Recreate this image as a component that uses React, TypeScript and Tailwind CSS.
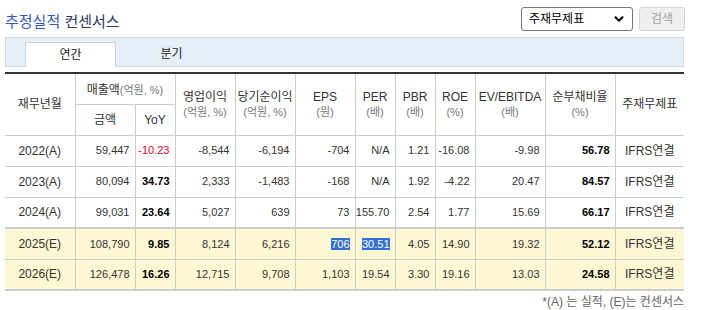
import React from "react";
import { ChevronDown } from "lucide-react";

type Row = {
  period: string;
  sales: string;
  yoy: string;
  op: string;
  net: string;
  eps: string;
  per: string;
  pbr: string;
  roe: string;
  ev: string;
  debt: string;
  estimate?: boolean;
  selected?: boolean;
};

const ROWS: ReadonlyArray<Row> = [
  { period: "2022(A)", sales: "59,447", yoy: "-10.23", op: "-8,544", net: "-6,194", eps: "-704", per: "N/A", pbr: "1.21", roe: "-16.08", ev: "-9.98", debt: "56.78" },
  { period: "2023(A)", sales: "80,094", yoy: "34.73", op: "2,333", net: "-1,483", eps: "-168", per: "N/A", pbr: "1.92", roe: "-4.22", ev: "20.47", debt: "84.57" },
  { period: "2024(A)", sales: "99,031", yoy: "23.64", op: "5,027", net: "639", eps: "73", per: "155.70", pbr: "2.54", roe: "1.77", ev: "15.69", debt: "66.17" },
  { period: "2025(E)", sales: "108,790", yoy: "9.85", op: "8,124", net: "6,216", eps: "706", per: "30.51", pbr: "4.05", roe: "14.90", ev: "19.32", debt: "52.12", estimate: true, selected: true },
  { period: "2026(E)", sales: "126,478", yoy: "16.26", op: "12,715", net: "9,708", eps: "1,103", per: "19.54", pbr: "3.30", roe: "19.16", ev: "13.03", debt: "24.58", estimate: true },
];

const WIDTHS = [70, 60, 40, 60, 60, 60, 40, 40, 40, 70, 70, 69];

const FONT = "font-['Liberation_Sans','Noto_Sans_CJK_KR',sans-serif]";

function Sel({ children, on }: { children: React.ReactNode; on?: boolean }): React.ReactElement {
  if (!on) return <>{children}</>;
  return <span className="bg-[#3470d2] text-white">{children}</span>;
}

function HeadCell({
  title,
  unit,
  first,
}: {
  title: string;
  unit?: string;
  first?: boolean;
}): React.ReactElement {
  return (
    <th
      rowSpan={2}
      className={`border-b border-[#cccccc] align-middle font-normal ${first ? "" : "border-l"}`}
    >
      <div className="text-[12px] leading-[15px] text-[#333]">{title}</div>
      {unit && <div className="text-[11px] leading-[14px] text-[#777]">{unit}</div>}
    </th>
  );
}

export default function App(): React.ReactElement {
  return (
    <div className={`h-[310px] w-[701px] overflow-hidden bg-white pl-[5px] ${FONT}`}>
      <div className="flex h-[37px] w-[680px] items-start justify-between">
        <h2 className="pt-[12px] text-[15px] leading-[19px] font-normal">
          <span className="text-[#3158cc]">추정실적</span>{" "}
          <span className="text-[#2f3760]">컨센서스</span>
        </h2>
        <div className="mt-[7px] flex items-center gap-[6px]">
          <div className="flex h-[24px] w-[112px] items-center justify-between rounded-[3px] border border-[#767676] bg-white pl-[7px] pr-[6px] text-[12px] text-black">
            <span>주재무제표</span>
            <ChevronDown size={14} strokeWidth={3.5} className="text-black" />
          </div>
          <div className="flex h-[24px] w-[46px] items-center justify-center rounded-[3px] border border-[#d4d4d4] bg-[#efefef] text-[12px] text-[#a0a0a0]">
            검색
          </div>
        </div>
      </div>

      <div className="flex h-[30px] w-[679px] items-end border border-[#d3dbe9] bg-[#e8eef8] pl-[19px]">
        <div className="-mb-px flex h-[25px] w-[91px] items-center justify-center border border-b-0 border-[#ccd5e5] bg-white text-[12px] text-[#222]">
          연간
        </div>
        <div className="ml-[10px] flex h-[25px] w-[91px] items-center justify-center text-[12px] text-[#222]">
          분기
        </div>
      </div>

      <table className="mt-[5px] w-[679px] table-fixed border-collapse border-t-2 border-b-2 border-t-[#333333] border-b-[#cccccc]">
        <colgroup>
          {WIDTHS.map((w, i) => (
            <col key={i} style={{ width: w }} />
          ))}
        </colgroup>
        <thead>
          <tr className="h-[31px]">
            <HeadCell title="재무년월" first />
            <th colSpan={2} className="border-b border-l border-[#cccccc] font-normal">
              <span className="text-[12px] text-[#333]">매출액</span>
              <span className="text-[11px] text-[#777]">(억원, %)</span>
            </th>
            <HeadCell title="영업이익" unit="(억원, %)" />
            <HeadCell title="당기순이익" unit="(억원, %)" />
            <HeadCell title="EPS" unit="(원)" />
            <HeadCell title="PER" unit="(배)" />
            <HeadCell title="PBR" unit="(배)" />
            <HeadCell title="ROE" unit="(%)" />
            <HeadCell title="EV/EBITDA" unit="(배)" />
            <HeadCell title="순부채비율" unit="(%)" />
            <HeadCell title="주재무제표" />
          </tr>
          <tr className="h-[31px]">
            <th className="border-b border-l border-[#cccccc] text-[12px] font-normal text-[#333]">금액</th>
            <th className="border-b border-l border-[#cccccc] text-[12px] font-normal text-[#333]">YoY</th>
          </tr>
        </thead>
        <tbody className="text-[11px] text-[#333]">
          {ROWS.map((r, i) => {
            const sep = i === 2 ? "border-b-2" : i === 4 ? "" : "border-b";
            const bg = r.estimate ? "bg-[#fdf7d4]" : "";
            const num = "border-l border-[#cccccc] pr-[5px] text-right";
            const neg = r.yoy.startsWith("-");
            return (
              <tr key={r.period} className={`h-[31px] ${bg} ${sep} border-[#cccccc]`}>
                <td className="text-center text-[12px]">{r.period}</td>
                <td className={num}>{r.sales}</td>
                <td className={`${num} ${neg ? "text-[#e8001c]" : "font-bold text-black"}`}>{r.yoy}</td>
                <td className={num}>{r.op}</td>
                <td className={num}>{r.net}</td>
                <td className={num}>
                  <Sel on={r.selected}>{r.eps}</Sel>
                </td>
                <td className={num}>
                  <Sel on={r.selected}>{r.per}</Sel>
                </td>
                <td className={num}>{r.pbr}</td>
                <td className={num}>{r.roe}</td>
                <td className={num}>{r.ev}</td>
                <td className={`${num} font-bold text-black`}>{r.debt}</td>
                <td className="border-l border-[#cccccc] text-center text-[12px]">IFRS연결</td>
              </tr>
            );
          })}
        </tbody>
      </table>

      <p className="mt-[3px] w-[679px] text-right text-[12px] leading-[16px] text-[#666]">
        *(A) 는 실적, (E)는 컨센서스
      </p>
    </div>
  );
}
